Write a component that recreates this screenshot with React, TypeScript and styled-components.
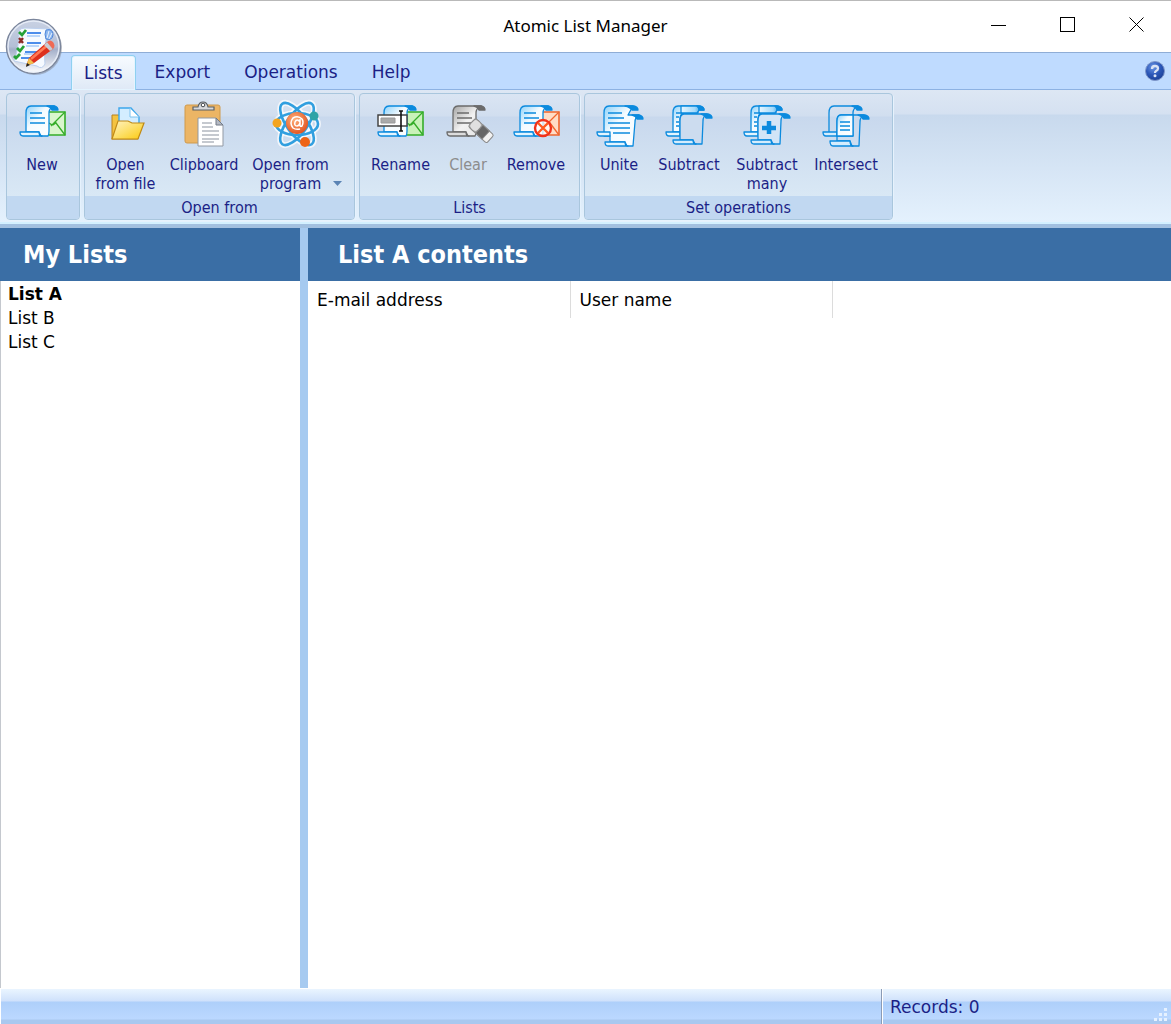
import React from "react";
import styled, { createGlobalStyle } from "styled-components";

const wide = `"DejaVu Sans", Verdana, sans-serif`;
const narrow = `"DejaVu Sans Condensed", Tahoma, "DejaVu Sans", sans-serif`;
const ink = "#1b1f86";

const Global = createGlobalStyle`
  *, *::before, *::after { box-sizing: border-box; }
  body { margin: 0; background: #fff; font-family: ${wide}; font-size: 17px; color: #000; }
  button { font: inherit; color: inherit; background: none; border: 0; padding: 0; margin: 0; }
`;

const Window = styled.div`
  position: relative;
  display: flex;
  flex-direction: column;
  min-height: 100vh;
  border-top: 1px solid #b9b9b9;
`;

const TitleBar = styled.header`
  display: grid;
  grid-template-columns: 1fr auto 1fr;
  align-items: center;
  height: 51px;
`;

const Title = styled.h1`
  grid-column: 2;
  margin: 0;
  padding-bottom: 2px;
  font: 400 17px/24px "Noto Sans", "Segoe UI", sans-serif;
`;

const WindowButtons = styled.div`
  display: flex;
  justify-content: flex-end;
  padding-bottom: 4px;
`;

const WindowButton = styled.button`
  display: grid;
  place-items: center;
  width: 69px;
  height: 40px;
`;

const AppButton = styled.button`
  position: absolute;
  left: 5px;
  top: 17px;
  width: 58px;
  height: 58px;
`;

const TabBar = styled.nav`
  display: flex;
  align-items: flex-end;
  height: 37px;
  padding: 0 6px 0 71px;
  border-top: 1px solid #8fadd6;
  background: #bfdbff;
`;

const Tab = styled.button<{ $active?: boolean }>`
  position: relative;
  height: ${(p) => (p.$active ? 35 : 34)}px;
  margin: 0 4px ${(p) => (p.$active ? -1 : 0)}px 0;
  padding: 0 ${(p) => (p.$active ? 12 : 14)}px;
  border: 1px solid ${(p) => (p.$active ? "#8fd0f0" : "transparent")};
  border-bottom: 0;
  border-radius: 4px 4px 0 0;
  background: ${(p) => (p.$active ? "linear-gradient(#f7fbff, #dfe9f6)" : "none")};
  box-shadow: ${(p) => (p.$active ? "inset 0 0 0 1px #e4f4ff" : "none")};
  color: ${ink};
  line-height: 33px;
`;

const HelpButton = styled.button`
  align-self: center;
  width: 20px;
  height: 20px;
  margin-left: auto;
`;

const Ribbon = styled.section`
  display: flex;
  gap: 4px;
  height: 135px;
  padding: 3px 6px;
  border-top: 1px solid #8db2e3;
  border-bottom: 2px solid #d3f0ff;
  background: linear-gradient(#dde7f4 0, #d5e1f1 24px, #c8d9ed 25px, #e4f1fd 100%);
`;

const Group = styled.section`
  display: flex;
  flex-direction: column;
  height: 127px;
  border: 1px solid #a9c6dd;
  border-radius: 4px;
  overflow: hidden;
  background: linear-gradient(#dae5f3 0, #d1deef 22px, #c8d8ed 23px, #d9e8f5 102px);
  box-shadow: 1px 1px 0 #e6f2fd;
`;

const GroupButtons = styled.div`
  display: flex;
  flex: 1;
  gap: 1px;
  padding: 7px 6px 0 4px;
`;

const GroupName = styled.h2`
  height: 23px;
  margin: 0;
  background: #c1d8f1;
  color: ${ink};
  font: 400 16px/24px ${narrow};
  text-align: center;
`;

const Tool = styled.button<{ $width: number }>`
  display: flex;
  flex-direction: column;
  align-items: center;
  gap: 6px;
  width: ${(p) => p.$width}px;
  color: ${ink};
  font: 400 16px/19px ${narrow};
  &:disabled { color: #8d8d8d; }
`;

const ToolLabel = styled.span`
  display: flex;
  align-items: flex-end;
  gap: 4px;
  white-space: pre-line;
`;

const Arrow = styled.svg`
  width: 9px;
  height: 19px;
`;

const IconBox = styled.svg`
  width: 48px;
  height: 48px;
  flex: none;
  overflow: visible;
`;

const Gradients = styled.svg`
  position: absolute;
`;

const Main = styled.main`
  display: grid;
  grid-template-columns: 300px 8px minmax(0, 1fr);
  flex: 1;
  border-top: 4px solid #a2c0e0;
`;

const Splitter = styled.div`
  background: #a6caf0;
`;

const Pane = styled.section`
  display: flex;
  flex-direction: column;
  align-items: stretch;
`;

const PaneTitle = styled.h2<{ $indent: number }>`
  height: 53px;
  margin: 0;
  padding-left: ${(p) => p.$indent}px;
  background: #3a6ea5;
  color: #fff;
  font: 700 25px/53px ${narrow};
`;

const Lists = styled.ul`
  flex: 1;
  margin: 0;
  padding: 1px 7px;
  border-left: 1px solid #c4c8ce;
  list-style: none;
`;

const ListItem = styled.li<{ $selected?: boolean }>`
  font-weight: ${(p) => (p.$selected ? 700 : 400)};
  line-height: 24px;
`;

const Table = styled.table`
  align-self: flex-start;
  border-collapse: collapse;
  table-layout: fixed;
`;

const Heading = styled.th`
  width: 262px;
  height: 37px;
  padding: 0 9px;
  border-right: 1px solid #dcdcdc;
  font-weight: 400;
  text-align: left;
`;

const StatusBar = styled.footer`
  display: flex;
  height: 36px;
  border: solid #fff;
  border-width: 1px 0 0 1px;
  background: linear-gradient(#eaf5ff 0, #cfe1fb 12px, #aecffa 13px, #bbd8ff 30px, #a9c8ef 31px, #a9c8ef 100%);
  color: ${ink};
`;

const StatusSpace = styled.div`
  flex: 1;
`;

const Records = styled.div`
  display: flex;
  justify-content: space-between;
  align-items: flex-end;
  width: 290px;
  padding-left: 8px;
  border-left: 1px solid #8b9bb5;
  box-shadow: inset 1px 0 0 #fff;
  line-height: 34px;
`;

const deep = "#0b8ade";

function Defs() {
  return (
    <Gradients width="0" height="0" aria-hidden="true">
      <defs>
        <linearGradient id="paper" x1="0" y1="0" x2="1" y2="1">
          <stop offset="0" stopColor="#8ed2fa" />
          <stop offset=".4" stopColor="#f4fbff" />
          <stop offset="1" stopColor="#fff" />
        </linearGradient>
        <linearGradient id="greyPaper" x1="0" y1="0" x2="1" y2="1">
          <stop offset="0" stopColor="#a4a4a4" />
          <stop offset=".5" stopColor="#f2f2f2" />
          <stop offset="1" stopColor="#e4e4e4" />
        </linearGradient>
        <linearGradient id="roll" x1="0" x2="1">
          <stop offset="0" stopColor="#e6f6ff" />
          <stop offset=".6" stopColor="#a5dafa" />
          <stop offset="1" stopColor="#1590df" />
        </linearGradient>
        <linearGradient id="folder" x1="0" y1="0" x2="1" y2="1">
          <stop offset="0" stopColor="#fff3c4" />
          <stop offset=".5" stopColor="#fde06a" />
          <stop offset="1" stopColor="#fbc90c" />
        </linearGradient>
        <linearGradient id="orb" x1="0" y1="0" x2="0" y2="1">
          <stop offset="0" stopColor="#c9d2e4" />
          <stop offset=".5" stopColor="#b4bfd6" />
          <stop offset=".55" stopColor="#a3afc9" />
          <stop offset="1" stopColor="#fff" />
        </linearGradient>
        <radialGradient id="helpBall" cx=".4" cy=".3" r=".8">
          <stop offset="0" stopColor="#6c97e6" />
          <stop offset=".5" stopColor="#2c57b8" />
          <stop offset="1" stopColor="#173a8f" />
        </radialGradient>
        <radialGradient id="core" cx=".4" cy=".35" r=".7">
          <stop offset="0" stopColor="#ffb27c" />
          <stop offset="1" stopColor="#e2501c" />
        </radialGradient>
      </defs>
    </Gradients>
  );
}

function Scroll({ grey = false, lines = true }) {
  const stroke = grey ? "#6b6b6b" : deep;
  return (
    <g stroke={stroke} strokeWidth="1.3" strokeLinejoin="round">
      <path d="M9 31V12Q9 5 14 5H37Q32 7 32 12V30Q32 34 31 35H24L22 31Z" fill={grey ? "url(#greyPaper)" : "url(#paper)"} />
      <path d="M30 5H38Q41 6 41 9H35Q34 6 30 5Z" fill={stroke} />
      <path d="M3 31H22Q22 35 25 35H6Q3 35 3 31Z" fill={grey ? "#ddd" : "#e3f5ff"} />
      {lines && <path d="M13 12H25M13 17H28M13 22H28" fill="none" />}
    </g>
  );
}

function Envelope({ color, fill }: { color: string; fill: string }) {
  return (
    <g stroke={color} strokeWidth="1.6">
      <path d="M31 11H48V34H31Z" fill={fill} />
      <path d="M48 11L34 25M39 22L48 34M32 22Q37 26 39 21" fill="none" strokeWidth="1.3" />
    </g>
  );
}

const NewIcon = () => (
  <IconBox viewBox="1 0 48 48">
    <Envelope color="#35ad28" fill="#d9f6cd" />
    <Scroll />
  </IconBox>
);

const RenameIcon = () => (
  <IconBox viewBox="2 0 48 48">
    <Envelope color="#35ad28" fill="#c9f2b9" />
    <Scroll lines={false} />
    <path d="M3 14H32V25H3Z" fill="#fff" stroke="#444" strokeWidth="1.5" />
    <path d="M6 17H20V22H6Z" fill="#aaa" stroke="#999" />
    <path d="M24 10H28M26 10V30M24 30H28" stroke="#111" strokeWidth="1.6" fill="none" />
  </IconBox>
);

const ClearIcon = () => (
  <IconBox viewBox="0 0 48 48">
    <Scroll grey />
    <g transform="rotate(43 37 29)" stroke="#8a8a8a">
      <rect x="25" y="24" width="25" height="11" rx="2" fill="#f2f2f2" />
      <rect x="35" y="24" width="9" height="11" fill="#666" />
      <rect x="25" y="24" width="10" height="11" rx="4" fill="#e0e0e0" />
    </g>
  </IconBox>
);

const RemoveIcon = () => (
  <IconBox viewBox="1 0 48 48">
    <Envelope color="#f0662e" fill="#ffdcc6" />
    <Scroll />
    <circle cx="32" cy="27" r="8" fill="#fff" fillOpacity=".75" stroke="#f0321c" strokeWidth="2.4" />
    <path d="M27 22L37 32M37 22L27 32" stroke="#ff5a1f" strokeWidth="2.4" />
  </IconBox>
);

const FileIcon = () => (
  <IconBox viewBox="0 0 48 48">
    <path d="M10 14H17L19 17H36V38H10Z" fill="#f4c340" stroke="#b9821c" />
    <path d="M17 7H29L37 16V30H17Z" fill="#d3edff" stroke="#3da7ec" strokeWidth="1.4" />
    <path d="M28 7V16H37Z" fill="#fff" stroke="#7cc2ee" />
    <path d="M10 38L16 20H26L30 22H42L36 38Z" fill="url(#folder)" stroke="#c08a16" strokeWidth="1.2" />
  </IconBox>
);

const ClipboardIcon = () => (
  <IconBox viewBox="0 0 48 48">
    <rect x="5" y="4" width="35" height="38" rx="2" fill="#ecb565" stroke="#cf9a4c" />
    <path d="M13 9V6H18Q19 1 23 1Q27 1 28 6H34V9Z" fill="#d7d9dc" stroke="#5b6064" strokeWidth="1.2" />
    <circle cx="23" cy="4" r="1.8" fill="#fff" stroke="#44484c" />
    <path d="M18 17H36L43 24V45H18Z" fill="#fff" stroke="#9299a3" />
    <path d="M36 17V24H43Z" fill="#b5bac4" stroke="#737b87" />
    <path d="M22 22H32M22 26H33M22 30H39M22 34H39M22 38H39M22 41H34" stroke="#b3b8c0" strokeWidth="1.3" />
  </IconBox>
);

const AtomIcon = () => (
  <IconBox viewBox="0 0 48 48">
    {[
      { c: "#fff", w: 6 },
      { c: "#319fdf", w: 2.6 },
    ].map((r) => (
      <g key={r.c} fill="none" stroke={r.c} strokeWidth={r.w} strokeOpacity={r.w > 3 ? 0.7 : 1}>
        <ellipse cx="24" cy="23" rx="25" ry="10" transform="rotate(54 24 23)" />
        <ellipse cx="24" cy="23" rx="25" ry="10" transform="rotate(-54 24 23)" />
        <ellipse cx="24" cy="23" rx="21" ry="11" />
      </g>
    ))}
    <circle cx="24" cy="22" r="11" fill="url(#core)" />
    <path d="M27 18V24Q27 26 29 25Q31 21 29 18Q25 14 20 17Q16 22 20 27Q23 29 27 28M27 21Q24 17 22 21Q21 25 24 25Q26 25 27 22" fill="none" stroke="#fff" strokeWidth="1.5" />
    <circle cx="4" cy="22" r="4.5" fill="#f3a41f" />
    <circle cx="41" cy="15" r="4.5" fill="#2fa3a6" />
    <circle cx="32" cy="41" r="5" fill="#ee6416" />
  </IconBox>
);

const BackScroll = () => (
  <g stroke={deep} strokeWidth="1.3" strokeLinejoin="round">
    <path d="M8 31V12Q8 5 13 5H33V12H19Q15 13 15 18V31Z" fill="url(#paper)" />
    <path d="M16 5H34Q39 6 39 9H34L32 12H16Z" fill="url(#roll)" />
    <path d="M32 5H35Q39 6 39 9H34Q34 7 32 5Z" fill={deep} />
    <path d="M1 31H15V35H4Q1 35 1 31Z" fill="#e3f5ff" />
    <path d="M11 12H17M11 16H14M11 21H14M11 25H14" fill="none" />
  </g>
);

const FrontScroll = ({ fill }: { fill: string }) => (
  <g stroke={deep} strokeWidth="1.3" strokeLinejoin="round">
    <path d="M15 39V20Q15 13 19 13H42Q38 15 38 20L37 43H30L28 39Z" fill={fill} />
    <path d="M36 13H43Q47 14 47 17H41Q40 14 36 13Z" fill={deep} />
    <path d="M8 39H28Q28 43 31 43H11Q8 43 8 39Z" fill="#d4edfd" />
  </g>
);

const UniteIcon = () => (
  <IconBox viewBox="0 0 48 48">
    <g stroke={deep} strokeWidth="1.3" strokeLinejoin="round">
      <path d="M9 31V12Q9 5 14 5H38L33 14H44Q40 16 40 21L38 45H32L30 41H15V35H9Z" fill="url(#paper)" />
      <path d="M30 5H39Q43 6 43 9H37Q35 6 30 5Z" fill={deep} />
      <path d="M37 14H44Q48 15 48 18H42Q41 15 37 14Z" fill={deep} />
      <path d="M2 31H15V35H5Q2 35 2 31Z" fill="#e3f5ff" />
      <path d="M10 41H30Q30 45 33 45H13Q10 45 10 41Z" fill="#e3f5ff" />
      <path d="M13 12H27M13 17H29M13 22H35M15 27H35M18 32H35" fill="none" />
    </g>
  </IconBox>
);

const SubtractIcon = () => (
  <IconBox viewBox="0 0 48 48">
    <BackScroll />
    <FrontScroll fill="#ccdcef" />
  </IconBox>
);

const SubtractManyIcon = () => (
  <IconBox viewBox="0 0 48 48">
    <BackScroll />
    <FrontScroll fill="#d2e5f7" />
    <path d="M26 20V33M19 27H33" stroke={deep} strokeWidth="4.5" />
  </IconBox>
);

const IntersectIcon = () => (
  <IconBox viewBox="1 0 48 48">
    <g stroke={deep} strokeWidth="1.3" strokeLinejoin="round" fill="none">
      <path d="M8 31V12Q8 5 13 5H37Q32 7 32 12V35H16" />
      <path d="M31 5H37Q41 6 41 9H36Q35 6 31 5Z" fill={deep} />
      <path d="M2 31H16V35H5Q2 35 2 31Z" fill="#d4edfd" />
      <path d="M16 40V20Q16 14 20 14H43Q39 16 39 21L38 45H31L29 40Z" />
      <path d="M16 20Q16 14 20 14H32V35H16Z" fill="url(#paper)" />
      <path d="M37 14H44Q48 15 48 18H42Q41 15 37 14Z" fill={deep} />
      <path d="M9 40H29Q29 45 32 45H12Q9 45 9 40Z" fill="#d4edfd" />
      <path d="M19 21H29M19 25H29M19 29H29" />
    </g>
  </IconBox>
);

const AppIcon = () => (
  <svg width="58" height="58" viewBox="0 0 58 58" aria-hidden="true">
    <circle cx="30" cy="30" r="27" fill="#7f8694" opacity=".5" />
    <circle cx="28.5" cy="28.5" r="27" fill="url(#orb)" stroke="#7b869c" strokeWidth="1.5" />
    <circle cx="28.5" cy="28.5" r="25.5" fill="none" stroke="#eef3fb" strokeWidth="1.5" opacity=".8" />
    <path d="M14 13Q15 10 20 10L45 11Q40 14 41 22Q38 34 40 46Q37 52 32 48L9 43Q14 30 14 13Z" fill="#f6faff" stroke="#bcd0ee" />
    <path d="M41 12Q48 10 48 17Q47 23 41 21Q39 16 41 12Z" fill="#8db8f0" stroke="#4f87da" />
    <path d="M44 13L42 20M47 15L44 21" stroke="#e9f2ff" />
    <path d="M22 15H36M22 25H36M20 34H33M16 40H27" stroke="#4c8deb" strokeWidth="2" />
    <path d="M22 18H35M21 28H34M19 36H30" stroke="#a8cbfa" strokeWidth="1.5" />
    <path d="M14 14L17 17L21 12M12 30L15 33L19 28M9 38L11 40L15 36" fill="none" stroke="#25a136" strokeWidth="2.8" />
    <path d="M14 20L18 25M18 20L14 25" stroke="#8c2a25" strokeWidth="2.4" />
    <path d="M21 48L24 40L42 24L48 31L29 45Z" fill="#dd2f1c" />
    <path d="M26 41L44 26" stroke="#ff7a55" strokeWidth="2.5" />
    <path d="M21 48L24 40L29 45Z" fill="#f1c14d" />
    <path d="M21 49L22 45L25 47Z" fill="#222" />
    <path d="M39 27L42 24L48 31L45 33Z" fill="#c9ccd3" />
    <path d="M42 24Q45 21 48 24Q51 28 48 31Z" fill="#ef6a55" />
  </svg>
);

const HelpIcon = () => (
  <svg width="20" height="20" viewBox="0 0 20 20" aria-hidden="true">
    <circle cx="10" cy="10" r="9.5" fill="url(#helpBall)" stroke="#7f97c9" />
    <path d="M7 8Q7 5 10 5Q13 5 13 7.500Q13 9 11 10Q10 10.500 10 12" fill="none" stroke="#d9e2f4" strokeWidth="2.3" />
    <circle cx="10" cy="14.700" r="1.500" fill="#d9e2f4" />
  </svg>
);

type ToolSpec = { label: string; icon: React.FC; width: number; disabled?: boolean; menu?: boolean };

const groups: { name: string; tools: ToolSpec[] }[] = [
  { name: "", tools: [{ label: "New", icon: NewIcon, width: 62 }] },
  {
    name: "Open from",
    tools: [
      { label: "Open\nfrom file", icon: FileIcon, width: 73 },
      { label: "Clipboard", icon: ClipboardIcon, width: 82 },
      { label: "Open from\nprogram", icon: AtomIcon, width: 102, menu: true },
    ],
  },
  {
    name: "Lists",
    tools: [
      { label: "Rename", icon: RenameIcon, width: 73 },
      { label: "Clear", icon: ClearIcon, width: 60, disabled: true },
      { label: "Remove", icon: RemoveIcon, width: 74 },
    ],
  },
  {
    name: "Set operations",
    tools: [
      { label: "Unite", icon: UniteIcon, width: 60 },
      { label: "Subtract", icon: SubtractIcon, width: 78 },
      { label: "Subtract\nmany", icon: SubtractManyIcon, width: 76 },
      { label: "Intersect", icon: IntersectIcon, width: 80 },
    ],
  },
];

export default function App() {
  return (
    <Window>
      <Global />
      <Defs />
      <TitleBar>
        <Title>Atomic List Manager</Title>
        <WindowButtons>
          <WindowButton aria-label="Minimize">
            <svg width="15" height="16" shapeRendering="crispEdges"><path d="M0 8.500H15" stroke="#000" /></svg>
          </WindowButton>
          <WindowButton aria-label="Maximize">
            <svg width="15" height="16" shapeRendering="crispEdges"><path d="M.5.5H14.500V14.500H.5Z" fill="none" stroke="#000" /></svg>
          </WindowButton>
          <WindowButton aria-label="Close">
            <svg width="15" height="16"><path d="M.5.5L14.500 14.500M14.500.5L.5 14.500" stroke="#000" /></svg>
          </WindowButton>
        </WindowButtons>
      </TitleBar>
      <TabBar>
        <Tab $active>Lists</Tab>
        <Tab>Export</Tab>
        <Tab>Operations</Tab>
        <Tab>Help</Tab>
        <HelpButton aria-label="Help topics"><HelpIcon /></HelpButton>
      </TabBar>
      <AppButton aria-label="Application menu"><AppIcon /></AppButton>
      <Ribbon>
        {groups.map((g) => (
          <Group key={g.name}>
            <GroupButtons>
              {g.tools.map((t) => (
                <Tool key={t.label} $width={t.width} disabled={t.disabled}>
                  <t.icon />
                  <ToolLabel>
                    <span>{t.label}</span>
                    {t.menu && (
                      <Arrow viewBox="0 0 9 19" aria-hidden="true"><path d="M0 7H9L4.500 12Z" fill="#5b84b4" /></Arrow>
                    )}
                  </ToolLabel>
                </Tool>
              ))}
            </GroupButtons>
            <GroupName>{g.name}</GroupName>
          </Group>
        ))}
      </Ribbon>
      <Main>
        <Pane>
          <PaneTitle $indent={23}>My Lists</PaneTitle>
          <Lists>
            <ListItem $selected>List A</ListItem>
            <ListItem>List B</ListItem>
            <ListItem>List C</ListItem>
          </Lists>
        </Pane>
        <Splitter />
        <Pane>
          <PaneTitle $indent={30}>List A contents</PaneTitle>
          <Table>
            <thead>
              <tr>
                <Heading scope="col">E-mail address</Heading>
                <Heading scope="col">User name</Heading>
              </tr>
            </thead>
          </Table>
        </Pane>
      </Main>
      <StatusBar>
        <StatusSpace />
        <Records>
          <span>Records: 0</span>
          <svg width="20" height="20" viewBox="0 0 20 20" aria-hidden="true">
            <path d="M13 4h3v3h-3zM8 9h3v3h-3zM13 9h3v3h-3zM3 14h3v3h-3zM8 14h3v3h-3zM13 14h3v3h-3z" fill="#e6f1ff" />
          </svg>
        </Records>
      </StatusBar>
    </Window>
  );
}
